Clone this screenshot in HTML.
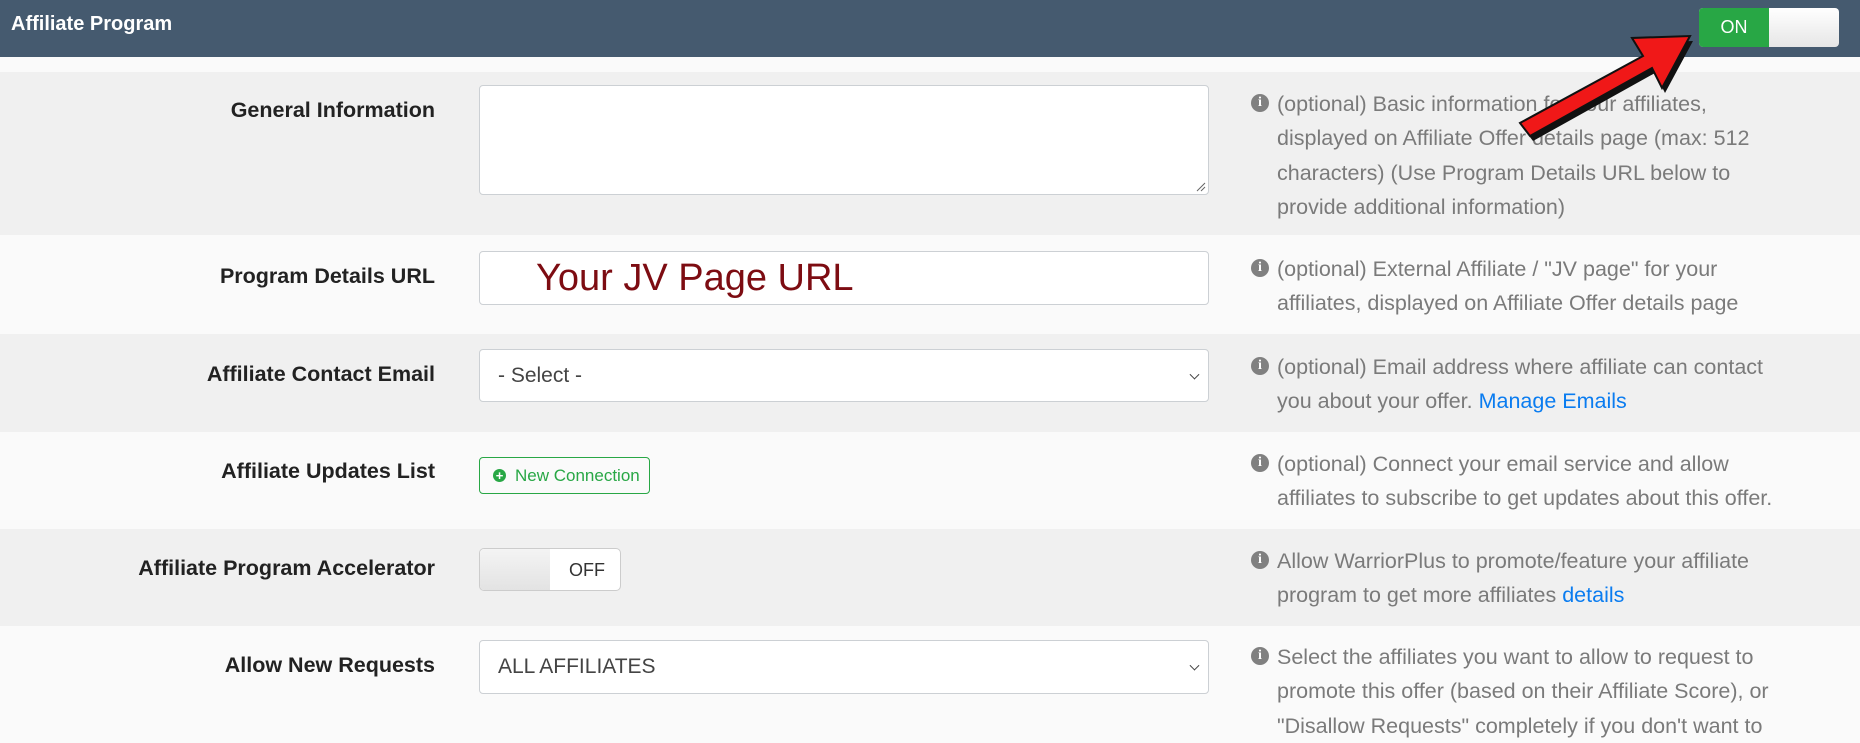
<!DOCTYPE html>
<html><head><meta charset="utf-8"><style>
*{box-sizing:border-box;margin:0;padding:0}
body{width:1860px;height:737px;overflow:hidden;background:#fafafa;font-family:"Liberation Sans",sans-serif;position:relative}
.hdr{position:absolute;left:0;top:0;width:1860px;height:57px;background:#455a6f}
.hdr h1{position:absolute;left:11px;top:13px;color:#fff;font-size:20px;font-weight:bold}
.row{position:absolute;left:0;width:1860px}
.g{background:#f0f0f0}.w{background:#fafafa}
.lbl{position:absolute;right:1425px;font-size:21.5px;font-weight:bold;color:#222;white-space:nowrap}
.help{position:absolute;left:1277px;font-size:21.5px;line-height:34.4px;color:#7a7a7a;white-space:nowrap}
.ic{position:absolute;left:-26px;top:7px;width:18px;height:18px;border-radius:50%;background:#808080;color:#fff;font:bold 14px "Liberation Serif",serif;text-align:center;line-height:18px}
.box{position:absolute;left:479px;width:730px;background:#fff;border:1px solid #ccd0d4;border-radius:4px}
.sel{font-size:21px;color:#444;padding-left:18px}
.chev{position:absolute;right:10px;top:50%;width:7px;height:7px;border-right:1.5px solid #444;border-bottom:1.5px solid #444;transform:translateY(-70%) rotate(45deg)}
a{color:#0a7cf0;text-decoration:none}
</style></head><body>
<div class="hdr"><h1>Affiliate Program</h1>
<div style="position:absolute;left:1699px;top:8px;width:140px;height:39px;border-radius:4px;overflow:hidden;background:linear-gradient(#fff,#e6e6e6)">
<div style="width:70px;height:39px;background:#28a745;color:#fff;font-size:18px;text-align:center;line-height:39px">ON</div></div>
</div>
<div class="row w" style="top:57px;height:15px"></div>
<div class="row g" style="top:72px;height:163px">
<div class="lbl" style="top:26px">General Information</div>
<div class="box" style="top:13px;height:110px"><svg style="position:absolute;right:2px;bottom:2px" width="12" height="12"><path d="M11 3L3 11M11 7L7 11" stroke="#666" stroke-width="1"/></svg></div>
<div class="help" style="top:15px"><span class="ic">i</span>(optional) Basic information for your affiliates,<br>displayed on Affiliate Offer details page (max: 512<br>characters) (Use Program Details URL below to<br>provide additional information)</div>
</div>
<div class="row w" style="top:235px;height:99px">
<div class="lbl" style="top:29px">Program Details URL</div>
<div class="box" style="top:16px;height:54px"><span style="position:absolute;left:56px;top:5px;font-size:38px;color:#7d0c12">Your JV Page URL</span></div>
<div class="help" style="top:17px"><span class="ic">i</span>(optional) External Affiliate / "JV page" for your<br>affiliates, displayed on Affiliate Offer details page</div>
</div>
<div class="row g" style="top:334px;height:98px">
<div class="lbl" style="top:28px">Affiliate Contact Email</div>
<div class="box sel" style="top:15px;height:53px;line-height:51px">- Select -<span class="chev"></span></div>
<div class="help" style="top:16px"><span class="ic">i</span>(optional) Email address where affiliate can contact<br>you about your offer. <a>Manage Emails</a></div>
</div>
<div class="row w" style="top:432px;height:97px">
<div class="lbl" style="top:27px">Affiliate Updates List</div>
<div style="position:absolute;left:479px;top:25px;width:171px;height:37px;border:1px solid #28a745;border-radius:4px;color:#28a745;font-size:17px;line-height:35px;padding-left:35px">New Connection<span style="position:absolute;left:13px;top:11px;width:13px;height:13px;border-radius:50%;background:#28a745;color:#fff;font:bold 13px/13px 'Liberation Sans';text-align:center">+</span></div>
<div class="help" style="top:15px"><span class="ic">i</span>(optional) Connect your email service and allow<br>affiliates to subscribe to get updates about this offer.</div>
</div>
<div class="row g" style="top:529px;height:97px">
<div class="lbl" style="top:27px">Affiliate Program Accelerator</div>
<div style="position:absolute;left:479px;top:19px;width:142px;height:43px;border:1px solid #ccc;border-radius:5px;overflow:hidden;background:#fff">
<div style="position:absolute;left:0;top:0;width:70px;height:43px;background:linear-gradient(#f4f4f4,#e2e2e2)"></div>
<span style="position:absolute;left:89px;top:11px;font-size:18px;color:#333">OFF</span></div>
<div class="help" style="top:15px"><span class="ic">i</span>Allow WarriorPlus to promote/feature your affiliate<br>program to get more affiliates <a>details</a></div>
</div>
<div class="row w" style="top:626px;height:111px">
<div class="lbl" style="top:27px">Allow New Requests</div>
<div class="box sel" style="top:14px;height:54px;line-height:52px">ALL AFFILIATES<span class="chev"></span></div>
<div class="help" style="top:14px"><span class="ic">i</span>Select the affiliates you want to allow to request to<br>promote this offer (based on their Affiliate Score), or<br>"Disallow Requests" completely if you don't want to</div>
</div>
<svg style="position:absolute;left:0;top:0" width="1860" height="737">
<polygon points="1530,136 1652,68 1662,88 1690,36 1632,38 1643,56 1520,123" fill="#111" transform="translate(3,5)"/>
<polygon points="1530,136 1652,68 1662,88 1690,36 1632,38 1643,56 1520,123" fill="#f01818" stroke="#111" stroke-width="2"/>
</svg>
</body></html>
